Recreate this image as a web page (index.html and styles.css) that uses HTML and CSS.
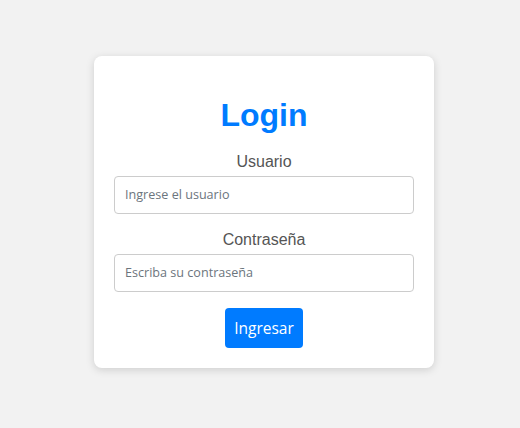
FILE: index.html
```html
<!DOCTYPE html>
<html lang="es">
<head>
<meta charset="utf-8">
<title>Login</title>
<link rel="stylesheet" href="styles.css">
</head>
<body>
<main class="page">
  <form class="card">
    <h1 class="title">Login</h1>
    <div class="field">
      <label class="label" for="u">Usuario</label>
      <input class="input" id="u" type="text" placeholder="Ingrese el usuario">
    </div>
    <div class="field">
      <label class="label" for="p">Contraseña</label>
      <input class="input" id="p" type="password" placeholder="Escriba su contraseña">
    </div>
    <div class="actions">
      <button class="btn" type="button">Ingresar</button>
    </div>
  </form>
</main>
</body>
</html>
```
FILE: styles.css
```css
html, body {
  margin: 0;
  padding: 0;
  height: 100%;
}
body {
  background: #f2f2f2;
  font-family: "Liberation Sans", Arial, sans-serif;
}
.page {
  box-sizing: border-box;
  height: 428px;
  padding: 0 0 5px 8px;
  display: flex;
  align-items: center;
  justify-content: center;
}
.card {
  box-sizing: border-box;
  width: 340px;
  background: #fff;
  border-radius: 8px;
  box-shadow: 0 2px 8px rgba(0, 0, 0, 0.15);
  padding: 41px 20px 20px;
  display: flex;
  flex-direction: column;
}
.title {
  margin: 0 0 19px;
  font-size: 32px;
  line-height: 37px;
  font-weight: bold;
  color: #007bff;
  text-align: center;
}
.field {
  display: flex;
  flex-direction: column;
  margin-bottom: 17px;
}
.label {
  font-size: 16px;
  line-height: 18px;
  color: #555;
  text-align: center;
  margin-bottom: 5px;
}
.input {
  box-sizing: border-box;
  height: 38px;
  width: 100%;
  border: 1px solid #ccc;
  border-radius: 4px;
  padding: 0 10px;
  font-family: "Open Sans", "Noto Sans", sans-serif;
  font-size: 12.6px;
  color: #333;
  background: #fff;
}
.input::placeholder {
  color: #6c757d;
}
.actions {
  display: flex;
  justify-content: center;
  margin-top: -1px;
}
.btn {
  height: 40px;
  padding: 0 9px;
  border: 0;
  border-radius: 4px;
  background: #007bff;
  color: #fff;
  font-family: "Open Sans", "Noto Sans", sans-serif;
  font-size: 15.5px;
}
```
